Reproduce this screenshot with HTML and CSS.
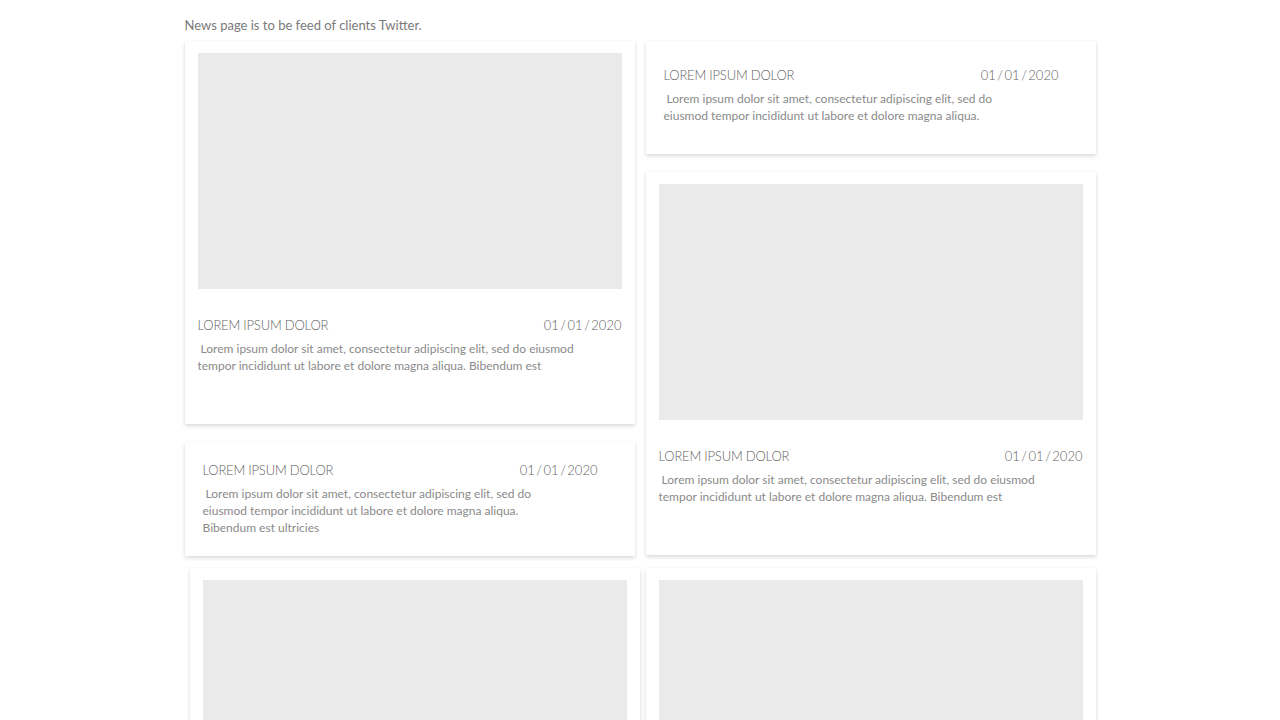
FILE: index.html
```
<!DOCTYPE html>
<html lang="en">
<head>
  <meta charset="UTF-8" />
  <meta name="viewport" content="width=device-width, initial-scale=1.0"/>
  <title>News</title>
  <link rel="stylesheet" href="styles.css">
</head>
<body>
  <div class="page">
    <p class="intro">News page is to be feed of clients Twitter.</p>

    <div class="feed">
      <div class="column">
        <div class="card card-photo">
          <div class="photo"></div>
          <div class="card-head">
            <span class="title">LOREM IPSUM DOLOR</span>
            <span class="date">01 / 01 / 2020</span>
          </div>
          <p class="text">&nbsp;Lorem ipsum dolor sit amet, consectetur adipiscing elit, sed do eiusmod tempor incididunt ut labore et dolore magna aliqua. Bibendum est</p>
        </div>

        <div class="card card-text card-low">
          <div class="card-head">
            <span class="title">LOREM IPSUM DOLOR</span>
            <span class="date">01 / 01 / 2020</span>
          </div>
          <p class="text">&nbsp;Lorem ipsum dolor sit amet, consectetur adipiscing elit, sed do eiusmod tempor incididunt ut labore et dolore magna aliqua. Bibendum est ultricies</p>
        </div>
      </div>

      <div class="column">
        <div class="card card-text">
          <div class="card-head">
            <span class="title">LOREM IPSUM DOLOR</span>
            <span class="date">01 / 01 / 2020</span>
          </div>
          <p class="text">&nbsp;Lorem ipsum dolor sit amet, consectetur adipiscing elit, sed do eiusmod tempor incididunt ut labore et dolore magna aliqua.</p>
        </div>

        <div class="card card-photo">
          <div class="photo"></div>
          <div class="card-head">
            <span class="title">LOREM IPSUM DOLOR</span>
            <span class="date">01 / 01 / 2020</span>
          </div>
          <p class="text">&nbsp;Lorem ipsum dolor sit amet, consectetur adipiscing elit, sed do eiusmod tempor incididunt ut labore et dolore magna aliqua. Bibendum est</p>
        </div>
      </div>
    </div>

    <div class="feed feed-next">
      <div class="card card-photo card-shift">
        <div class="photo"></div>
      </div>
      <div class="card card-photo">
        <div class="photo"></div>
      </div>
    </div>
  </div>
</body>
</html>
```

FILE: styles.css
```
body {
  margin: 0;
  background-color: #fff;
  font-family: Lato, "Open Sans", sans-serif;
  color: #777;
}

.page {
  width: 911px;
  margin: 0 auto;
}

.intro {
  margin: 0;
  padding-top: 17px;
  height: 24px;
  font-size: 13px;
  line-height: 16px;
  color: #7a7a7a;
}

.feed {
  display: grid;
  grid-template-columns: 450px 450px;
  column-gap: 11px;
  align-items: start;
}

.feed-next {
  margin-top: 12px;
}

.column {
  display: flex;
  flex-direction: column;
  gap: 18px;
}

.card {
  background-color: #fff;
  box-shadow: 0 2px 4px rgba(0,0,0,0.15), 0 0 1px rgba(0,0,0,0.06);
}

.card-photo {
  padding: 12px 13px 50px;
}

.card-shift {
  margin-left: 5px;
  margin-right: -5px;
}

.photo {
  height: 236px;
  background-color: #eaeaea;
}

.card-photo .card-head {
  margin-top: 28px;
}

.card-text {
  padding: 26px 37px 30px 18px;
}

.card-low {
  padding-top: 20px;
  padding-bottom: 20px;
}

.card-head {
  display: flex;
  justify-content: space-between;
  font-size: 13px;
  line-height: 16px;
  font-weight: 300;
  color: #5f5f5f;
}

.title {
  letter-spacing: -0.2px;
}

.date {
  word-spacing: -2px;
}

.text {
  margin: 7px 0 0;
  font-size: 12px;
  line-height: 17px;
  color: #8a8a8a;
  max-width: 390px;
}

.card-text .text {
  max-width: 335px;
}
```
